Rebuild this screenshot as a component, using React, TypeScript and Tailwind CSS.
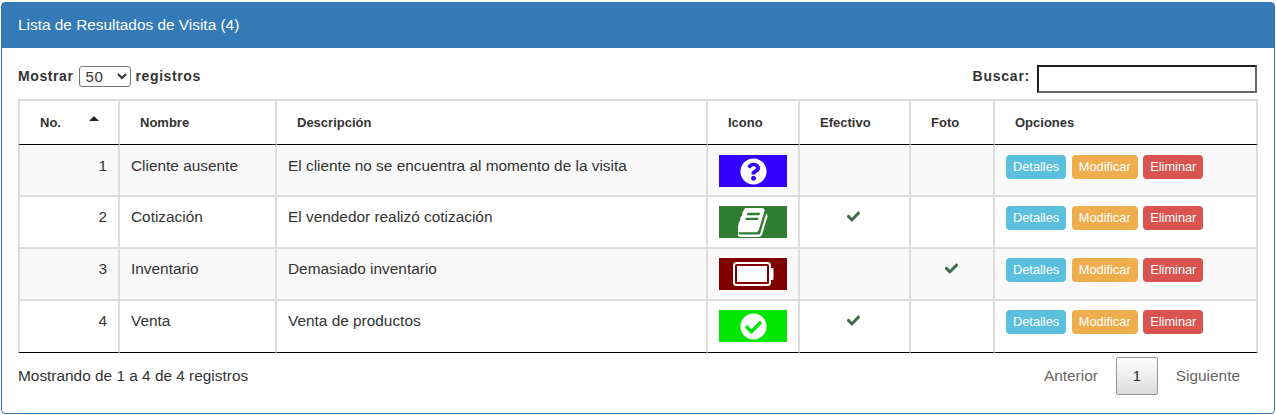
import { FaCheck, FaCheckCircle, FaQuestionCircle } from "react-icons/fa";

const BOOK =
  "M1639 478q40 57 18 129l-275 906q-19 64-76.5 107.5t-122.5 43.5h-923q-77 0-148.5-53.5t-99.5-131.5q-24-67-2-127 0-4 3-27t4-37q1-8-3-21.5t-3-19.5q2-11 8-21t16.5-23.5 16.5-23.5q23-38 45-91.5t30-91.5q3-10 .5-30t-.5-28q3-11 17-28t17-23q21-36 42-92t25-90q1-9-2.5-32t.5-28q4-13 22-30.5t22-22.5q19-26 42.5-84.5t27.5-96.5q1-8-3-25.5t-2-26.5q2-8 9-18t18-23 17-21q8-12 16.5-30.5t15-35 16-36 19.5-32 26.5-23.5 36-11.5 47.5 5.5l-1 3q38-9 51-9h761q74 0 114 56t18 130l-274 906q-36 119-71.5 153.5t-128.5 34.5h-869q-27 0-38 15-11 16-1 43 24 70 144 70h923q29 0 56-15.5t35-41.5l300-987q7-22 5-57 38 15 59 43zm-1064 2q-4 13 2 22.5t20 9.5h608q13 0 25.5-9.5t16.5-22.5l21-64q4-13-2-22.5t-20-9.5h-608q-13 0-25.5 9.5t-16.5 22.5zm-83 256q-4 13 2 22.5t20 9.5h608q13 0 25.5-9.5t16.5-22.5l21-64q4-13-2-22.5t-20-9.5h-608q-13 0-25.5 9.5t-16.5 22.5z";

function BookIcon() {
  return (
    <svg viewBox="128 128 1536 1536" className="h-[29px] w-[30px]" fill="#fff">
      <path d={BOOK} />
    </svg>
  );
}

function BatteryIcon() {
  return (
    <svg viewBox="0 0 41 24" className="h-[24px] w-[41px]" fill="none">
      <rect x="1" y="1" width="36" height="22" rx="2.5" stroke="#fff" strokeWidth="2" />
      <rect x="4" y="4" width="30" height="16" fill="#fff" />
      <path d="M37 6h2.5a1 1 0 0 1 1 1v10a1 1 0 0 1-1 1H37z" fill="#fff" />
    </svg>
  );
}

const ROWS = [
  {
    no: 1,
    name: "Cliente ausente",
    desc: "El cliente no se encuentra al momento de la visita",
    bg: "bg-[#3300ff]",
    icon: <FaQuestionCircle className="text-white" size={27} />,
    cash: false,
    photo: false,
  },
  {
    no: 2,
    name: "Cotización",
    desc: "El vendedor realizó cotización",
    bg: "bg-[#2e7d32]",
    icon: <BookIcon />,
    cash: true,
    photo: false,
  },
  {
    no: 3,
    name: "Inventario",
    desc: "Demasiado inventario",
    bg: "bg-[#800000]",
    icon: <BatteryIcon />,
    cash: false,
    photo: true,
  },
  {
    no: 4,
    name: "Venta",
    desc: "Venta de productos",
    bg: "bg-[#00e600]",
    icon: <FaCheckCircle className="text-white" size={27} />,
    cash: true,
    photo: false,
  },
];

const HEADERS = [
  { label: "No.", w: "w-[102px]" },
  { label: "Nombre", w: "w-[157px]" },
  { label: "Descripción", w: "w-[431px]" },
  { label: "Icono", w: "w-[92px]" },
  { label: "Efectivo", w: "w-[111px]" },
  { label: "Foto", w: "w-[84px]" },
  { label: "Opciones", w: "w-[263px]" },
];

function Btn({ label, color }: { label: string; color: string }) {
  return (
    <button className={`h-[24px] rounded-[4px] px-[7px] text-[12.8px] leading-[18px] text-white ${color}`}>{label}</button>
  );
}

function Tick() {
  return <FaCheck className="mx-auto text-[#3f6b4a]" size={13} stroke="currentColor" strokeWidth={20} />;
}

export default function App() {
  return (
    <div className="h-[415px] w-[1276px] bg-white pt-[2px] pl-px font-['Liberation_Sans',Arial,sans-serif] text-[15.4px] text-[#333]">
      <div className="h-[412px] w-[1274px] rounded-[4px] border border-[#337ab7]">
        <div className="flex h-[45px] items-center bg-[#337ab7] px-[16px] pb-px text-white">
          Lista de Resultados de Visita (4)
        </div>
        <div className="px-[16px]">
          <div className="flex h-[51px] items-center justify-between pt-[5px] text-[14px]">
            <label className="flex items-center gap-[5px] font-bold tracking-[0.6px]">
              Mostrar
              <select
                defaultValue="50"
                className="h-[21px] w-[52px] rounded-[3px] border border-[#767676] bg-white pl-[2px] font-['Liberation_Sans',Arial,sans-serif] text-[15px] font-normal"
              >
                <option>10</option>
                <option>50</option>
              </select>
              registros
            </label>
            <label className="flex items-center gap-[7px] pr-px font-bold tracking-[0.75px]">
              Buscar:
              <input className="mt-[6px] h-[28px] w-[220px] border-2 border-[#1f1f1f] border-r-[#666] border-b-[#666] bg-white" />
            </label>
          </div>
          <table className="w-[1240px] table-fixed border-separate border-spacing-0">
            <thead>
              <tr>
                {HEADERS.map((h, i) => (
                  <th
                    key={h.label}
                    className={`relative h-[46px] border-t-2 border-r-2 border-b border-t-[#ddd] border-r-[#ddd] border-b-black pl-[20px] text-left text-[13px] font-bold ${h.w} ${i === 0 ? "border-l-2 border-l-[#ddd]" : ""}`}
                  >
                    {h.label}
                    {i === 0 && (
                      <span className="absolute top-[15px] right-[19px] h-0 w-0 border-x-[5px] border-b-[5px] border-x-transparent border-b-[#222]" />
                    )}
                  </th>
                ))}
              </tr>
            </thead>
            <tbody>
              {ROWS.map((r, idx) => {
                const bg = idx % 2 === 0 ? "bg-[#f9f9f9]" : "bg-white";
                const border = idx === ROWS.length - 1 ? "border-b border-b-black" : "border-b-2 border-b-[#ddd]";
                const td = `h-[52px] border-r-2 border-r-[#ddd] align-top leading-[20px] ${bg} ${border}`;
                const textTop = idx === 0 ? "pt-[11px]" : "pt-[10px]";
                const boxTop = idx === 0 ? "pt-[10px]" : "pt-[9px]";
                return (
                  <tr key={r.no}>
                    <td className={`${td} ${textTop} border-l-2 border-l-[#ddd] pr-[11px] text-right`}>{r.no}</td>
                    <td className={`${td} ${textTop} pl-[11px]`}>{r.name}</td>
                    <td className={`${td} ${textTop} pl-[11px]`}>{r.desc}</td>
                    <td className={`${td} ${boxTop}`}>
                      <div className={`mx-auto flex h-[32px] w-[68px] items-center justify-center overflow-hidden ${r.bg}`}>{r.icon}</div>
                    </td>
                    <td className={`${td} pt-[13px] pr-[2px]`}>{r.cash && <Tick />}</td>
                    <td className={`${td} pt-[13px] pr-[2px]`}>{r.photo && <Tick />}</td>
                    <td className={`${td} ${boxTop} pl-[11px]`}>
                      <div className="flex gap-[5.5px]">
                        <Btn label="Detalles" color="bg-[#5bc0de]" />
                        <Btn label="Modificar" color="bg-[#f0ad4e]" />
                        <Btn label="Eliminar" color="bg-[#d9534f]" />
                      </div>
                    </td>
                  </tr>
                );
              })}
            </tbody>
          </table>
          <div className="flex items-start justify-between pt-[4px]">
            <div className="pt-[7px]">Mostrando de 1 a 4 de 4 registros</div>
            <div className="flex items-center">
              <span className="px-[18px] text-[#666]">Anterior</span>
              <span className="flex h-[38px] w-[42px] items-center justify-center rounded-[2px] border border-[#979797] bg-gradient-to-b from-white to-[#dcdcdc]">
                1
              </span>
              <span className="px-[18px] text-[#666]">Siguiente</span>
            </div>
          </div>
        </div>
      </div>
    </div>
  );
}
